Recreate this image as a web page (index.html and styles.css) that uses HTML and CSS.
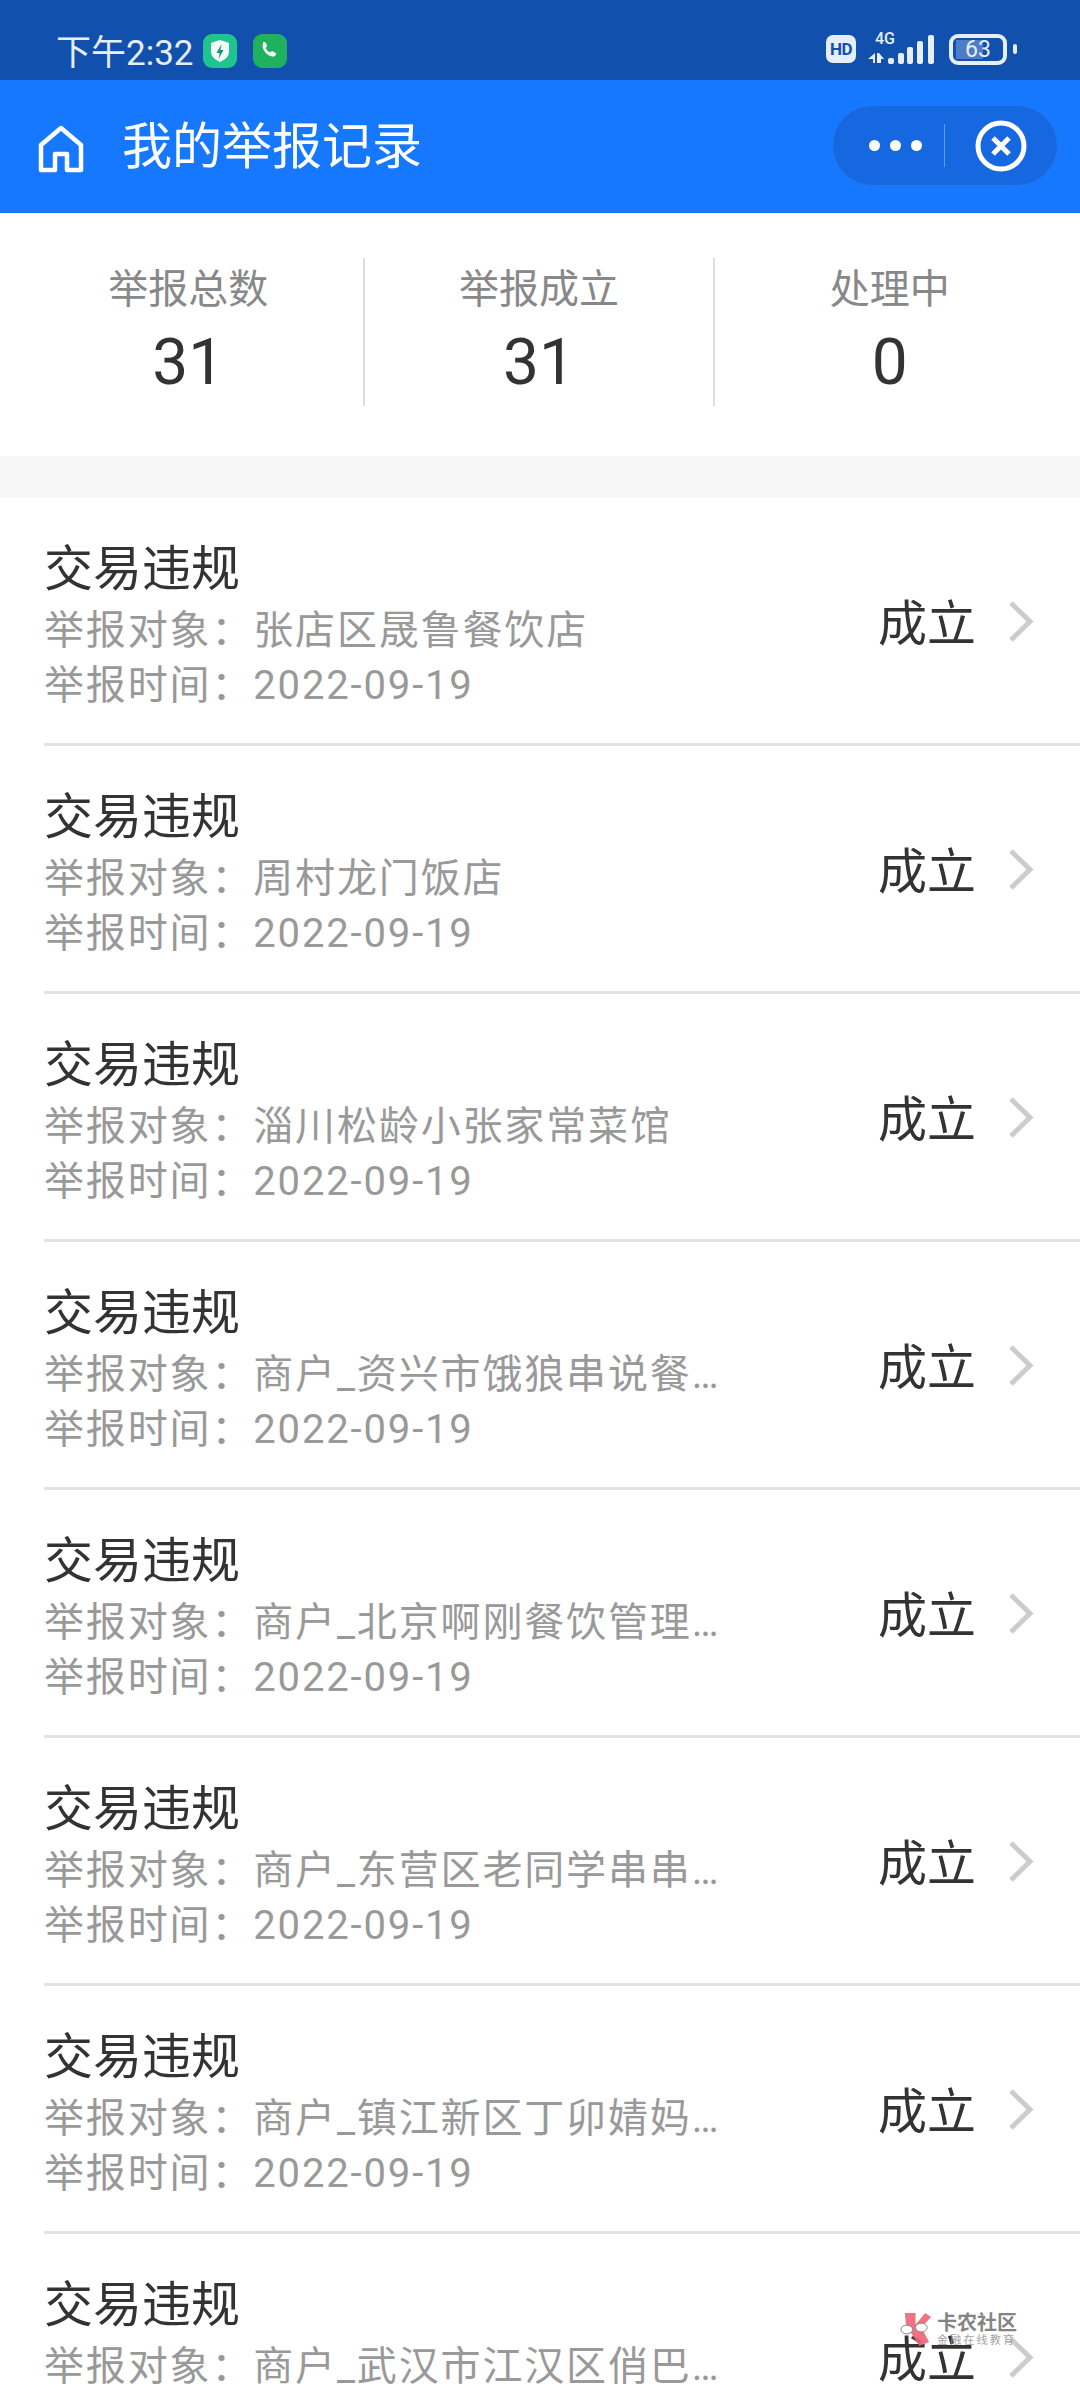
FILE: index.html
```html
<!DOCTYPE html>
<html lang="zh-CN">
<head>
    <meta charset="UTF-8">
    <meta name="viewport" content="width=device-width, initial-scale=1.0">
    <title>我的举报记录</title>
    <link rel="stylesheet" href="styles.css">
</head>
<body>

    <!-- Phone status bar -->
    <div class="status-bar">
        <span class="status-time">下午2:32</span>
        <svg class="app-icon shield-icon" viewBox="0 0 34 34">
            <rect width="34" height="34" rx="9" fill="#1FC48E"/>
            <path d="M17 6l9 3v8c0 6-4 8.500-9 11-5-2.500-9-5-9-11V9z" fill="#F2FBF8"/>
            <path d="M18.500 10l-5 9h3.200l-1.200 6 5-9h-3.200z" fill="#17936E"/>
        </svg>
        <svg class="app-icon phone-icon" viewBox="0 0 34 34">
            <rect width="34" height="34" rx="9" fill="#20B15F"/>
            <path d="M10 8.500c1-.8 2.200-.6 2.700.3l1.100 2.400c.3.700.2 1.200-.4 1.800l-.9.800c.9 2.100 2.600 3.800 4.700 4.700l.9-.9c.6-.5 1.100-.6 1.800-.2l2.400 1.300c.9.500 1.100 1.600.3 2.500-1 1.200-2.600 1.600-4.100 1.100-4.500-1.500-7.600-4.900-8.700-8.900-.4-1.600 0-3.500.2-4.700z" fill="#fff"/>
        </svg>
        <span class="status-spacer"></span>
        <span class="hd-badge">HD</span>
        <div class="network">
            <span class="network-label">4G</span>
            <svg class="signal-icon" viewBox="0 0 67 32">
                <path d="M7 20v10H5v-4H0zM9 20h2l5 6h-3v4H9z" fill="#E6EEF9"/>
                <rect x="20" y="25" width="6" height="6" rx="2" fill="#E6EEF9"/>
                <rect x="30" y="20" width="6" height="11" rx="2" fill="#E6EEF9"/>
                <rect x="39" y="14" width="6" height="17" rx="2" fill="#E6EEF9"/>
                <rect x="49" y="8" width="6" height="23" rx="2" fill="#E6EEF9"/>
                <rect x="60" y="2" width="6" height="29" rx="2" fill="#E6EEF9"/>
            </svg>
        </div>
        <div class="battery">
            <div class="battery-body">
                <div class="battery-fill"></div>
                <span class="battery-level">63</span>
            </div>
            <div class="battery-cap"></div>
        </div>
    </div>

    <!-- Title bar -->
    <div class="nav-bar">
        <svg class="home-icon" viewBox="0 0 46 48">
            <path d="M3 20L23 3l20 17v25H29V29H17v16H3z" fill="none" stroke="#fff" stroke-width="4.500" stroke-linejoin="round"/>
        </svg>
        <h1 class="nav-title">我的举报记录</h1>
        <div class="capsule">
            <div class="capsule-dots">
                <span class="dot"></span>
                <span class="dot"></span>
                <span class="dot"></span>
            </div>
            <div class="capsule-line"></div>
            <svg class="close-icon" viewBox="0 0 52 52">
                <circle cx="26" cy="26" r="23" fill="none" stroke="#fff" stroke-width="5"/>
                <path d="M18 18l16 16M34 18L18 34" fill="none" stroke="#fff" stroke-width="5"/>
            </svg>
        </div>
    </div>

    <!-- Totals -->
    <div class="stats">
        <div class="stat">
            <div class="stat-label">举报总数</div>
            <div class="stat-value">31</div>
        </div>
        <div class="stat">
            <div class="stat-label">举报成立</div>
            <div class="stat-value">31</div>
        </div>
        <div class="stat">
            <div class="stat-label">处理中</div>
            <div class="stat-value">0</div>
        </div>
    </div>

    <!-- Report records -->
    <div class="record-list">
        <div class="record">
            <div class="record-info">
                <div class="record-title">交易违规</div>
                <div class="record-line">举报对象：张店区晟鲁餐饮店</div>
                <div class="record-line">举报时间：2022-09-19</div>
            </div>
            <div class="record-status">成立</div>
            <svg class="chevron" viewBox="0 0 27 43"><path d="M3 3l19 18.500L3 40"/></svg>
        </div>
        <div class="record">
            <div class="record-info">
                <div class="record-title">交易违规</div>
                <div class="record-line">举报对象：周村龙门饭店</div>
                <div class="record-line">举报时间：2022-09-19</div>
            </div>
            <div class="record-status">成立</div>
            <svg class="chevron" viewBox="0 0 27 43"><path d="M3 3l19 18.500L3 40"/></svg>
        </div>
        <div class="record">
            <div class="record-info">
                <div class="record-title">交易违规</div>
                <div class="record-line">举报对象：淄川松龄小张家常菜馆</div>
                <div class="record-line">举报时间：2022-09-19</div>
            </div>
            <div class="record-status">成立</div>
            <svg class="chevron" viewBox="0 0 27 43"><path d="M3 3l19 18.500L3 40"/></svg>
        </div>
        <div class="record">
            <div class="record-info">
                <div class="record-title">交易违规</div>
                <div class="record-line">举报对象：商户_资兴市饿狼串说餐饮店</div>
                <div class="record-line">举报时间：2022-09-19</div>
            </div>
            <div class="record-status">成立</div>
            <svg class="chevron" viewBox="0 0 27 43"><path d="M3 3l19 18.500L3 40"/></svg>
        </div>
        <div class="record">
            <div class="record-info">
                <div class="record-title">交易违规</div>
                <div class="record-line">举报对象：商户_北京啊刚餐饮管理有限公司</div>
                <div class="record-line">举报时间：2022-09-19</div>
            </div>
            <div class="record-status">成立</div>
            <svg class="chevron" viewBox="0 0 27 43"><path d="M3 3l19 18.500L3 40"/></svg>
        </div>
        <div class="record">
            <div class="record-info">
                <div class="record-title">交易违规</div>
                <div class="record-line">举报对象：商户_东营区老同学串串香店</div>
                <div class="record-line">举报时间：2022-09-19</div>
            </div>
            <div class="record-status">成立</div>
            <svg class="chevron" viewBox="0 0 27 43"><path d="M3 3l19 18.500L3 40"/></svg>
        </div>
        <div class="record">
            <div class="record-info">
                <div class="record-title">交易违规</div>
                <div class="record-line">举报对象：商户_镇江新区丁卯婧妈小吃店</div>
                <div class="record-line">举报时间：2022-09-19</div>
            </div>
            <div class="record-status">成立</div>
            <svg class="chevron" viewBox="0 0 27 43"><path d="M3 3l19 18.500L3 40"/></svg>
        </div>
        <div class="record">
            <div class="record-info">
                <div class="record-title">交易违规</div>
                <div class="record-line">举报对象：商户_武汉市江汉区俏巴渝火锅店</div>
                <div class="record-line">举报时间：2022-09-19</div>
            </div>
            <div class="record-status">成立</div>
            <svg class="chevron" viewBox="0 0 27 43"><path d="M3 3l19 18.500L3 40"/></svg>
        </div>
    </div>

    <!-- Forum watermark laid over the last row -->
    <div class="watermark">
        <svg class="watermark-logo" viewBox="0 0 34 36">
            <path d="M5 1h11v12l10-12 6 4-10 11 8 15-10 4-9-14-4 1z" fill="#EE6475"/>
            <ellipse cx="7" cy="18" rx="6" ry="4.500" fill="#fff" stroke="#777" stroke-width="1"/>
            <ellipse cx="22" cy="16" rx="6" ry="4.500" fill="#fff" stroke="#777" stroke-width="1"/>
        </svg>
        <div class="watermark-text">
            <div class="watermark-name">卡农社区</div>
            <div class="watermark-sub">金融在线教育</div>
        </div>
    </div>

</body>
</html>
```

FILE: styles.css
```css
* {
    margin: 0;
    padding: 0;
    box-sizing: border-box;
}

html, body {
    width: 1080px;
    height: 2400px;
    overflow: hidden;
}

body {
    position: relative;
    font-family: Roboto, "Noto Sans CJK SC", sans-serif;
    background-color: white;
    color: #333;
}

/* Status bar */
.status-bar {
    height: 80px;
    background-color: #1250AE;
    display: flex;
    align-items: center;
    padding: 18px 0 0 56px;
    color: #E6EEF9;
}

.status-time {
    font-size: 35px;
    width: 142px;
    white-space: nowrap;
    margin-top: 1px;
}

.app-icon {
    width: 34px;
    height: 34px;
    margin-top: 3px;
}

.shield-icon {
    margin-left: 5px;
}

.phone-icon {
    margin-left: 16px;
}

.status-spacer {
    flex: 1;
}

.hd-badge {
    width: 30px;
    height: 28px;
    background-color: #E6EEF9;
    color: #1250AE;
    border-radius: 7px;
    font-size: 17px;
    font-weight: 700;
    text-align: center;
    line-height: 28px;
    letter-spacing: -0.500px;
}

.network {
    width: 67px;
    height: 32px;
    margin-left: 12px;
    position: relative;
}

.network-label {
    position: absolute;
    left: 7px;
    top: -2px;
    font-size: 16px;
    line-height: 16px;
    font-weight: 500;
}

.signal-icon {
    display: block;
    width: 67px;
    height: 32px;
}

.battery {
    display: flex;
    align-items: center;
    margin-left: 14px;
    margin-right: 63px;
}

.battery-body {
    width: 58px;
    height: 31px;
    border: 4px solid #E6EEF9;
    border-radius: 9px;
    padding: 2px 3px;
    position: relative;
}

.battery-fill {
    width: 62%;
    height: 100%;
    background-color: #4F7CC6;
}

.battery-level {
    position: absolute;
    left: 0;
    right: 0;
    top: 0;
    text-align: center;
    font-size: 23px;
    line-height: 23px;
}

.battery-cap {
    width: 4px;
    height: 10px;
    margin-left: 6px;
    border-radius: 2px;
    background-color: #E6EEF9;
}

/* Title bar */
.nav-bar {
    height: 133px;
    background-color: #1677FF;
    display: flex;
    align-items: center;
    padding: 0 22px 0 38px;
    color: white;
}

.home-icon {
    width: 46px;
    height: 48px;
    margin-top: 4px;
}

.nav-title {
    flex: 1;
    margin-left: 38px;
    margin-bottom: 10px;
    font-size: 50px;
    font-weight: 400;
    white-space: nowrap;
}

.capsule {
    width: 226px;
    height: 81px;
    margin-bottom: 2px;
    background-color: #1568E0;
    border: 1px solid #2478F0;
    border-radius: 41px;
    display: flex;
    align-items: center;
}

.capsule-dots {
    display: flex;
    gap: 10px;
    margin-left: 36px;
}

.dot {
    width: 11px;
    height: 11px;
    background-color: white;
    border-radius: 50%;
}

.capsule-line {
    width: 1px;
    height: 43px;
    margin-left: 22px;
    background-color: #5B9DF5;
}

.close-icon {
    width: 52px;
    height: 52px;
    margin-left: 30px;
}

/* Totals */
.stats {
    display: flex;
    padding: 45px 16px 50px 14px;
    border-bottom: 42px solid #F7F7F7;
    height: 285px;
}

.stat {
    flex: 1;
    height: 148px;
    text-align: center;
    border-right: 2px solid #DDD;
}

.stat:last-child {
    border-right: none;
}

.stat-label {
    font-size: 40px;
    line-height: 56px;
    color: #888;
    margin-top: 4px;
}

.stat-value {
    font-size: 64px;
    line-height: 76px;
    color: #333;
    margin-top: 7px;
}

/* Report records */
.record {
    height: 248px;
    margin-left: 44px;
    padding-right: 44px;
    border-bottom: 3px solid #E2E2E2;
    display: flex;
    align-items: center;
}

.record-info {
    width: 678px;
    margin-top: 8px;
}

.record-title {
    font-size: 49px;
    line-height: 66px;
    color: #333;
}

.record-line {
    font-size: 40px;
    line-height: 55px;
    letter-spacing: 1.850px;
    color: #999;
    white-space: nowrap;
    overflow: hidden;
    text-overflow: ellipsis;
}

.record-status {
    margin-left: 156px;
    margin-bottom: 3px;
    font-size: 49px;
    color: #333;
    white-space: nowrap;
}

.chevron {
    width: 27px;
    height: 43px;
    margin-left: 32px;
    margin-top: 2px;
    fill: none;
    stroke: #CCC;
    stroke-width: 5;
}

/* Watermark */
.watermark {
    position: absolute;
    left: 900px;
    top: 2312px;
    display: flex;
    gap: 4px;
    opacity: 0.9;
}

.watermark-logo {
    width: 33px;
    height: 35px;
}

.watermark-name {
    font-size: 20px;
    line-height: 22px;
    font-weight: 700;
    color: #777;
    white-space: nowrap;
}

.watermark-sub {
    font-size: 11px;
    line-height: 14px;
    color: #999;
    letter-spacing: 2.200px;
    white-space: nowrap;
}
```
